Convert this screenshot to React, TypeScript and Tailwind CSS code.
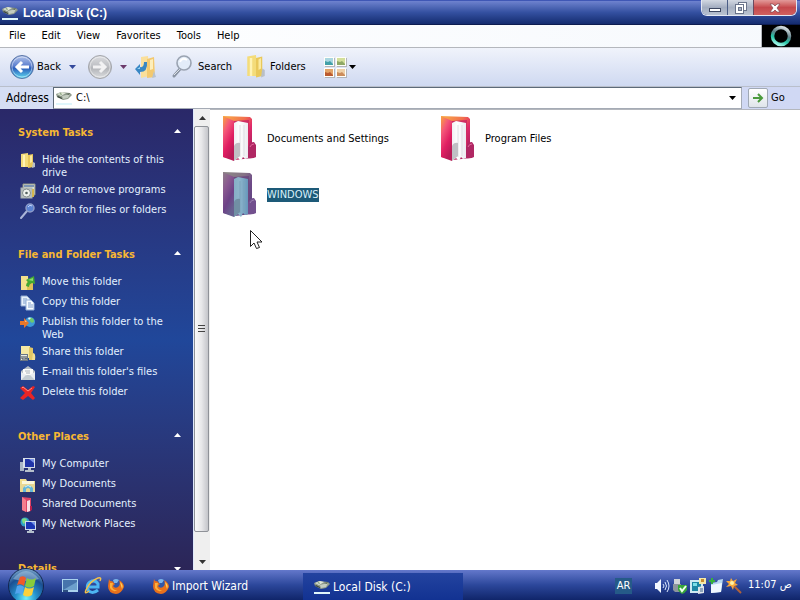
import React from "react";

type IconProps = { className?: string };

function DriveIcon({ className = "h-4 w-4" }: IconProps) {
  return (
    <svg viewBox="0 0 16 16" className={className} aria-hidden="true">
      <path d="M0 4 L5 2 L14 3 L16 5 L12 9 L7 10 L1 7Z" fill="#8f9a8c" />
      <path d="M1 4 L6 2 L10 3 L5 6Z" fill="#dfe6d6" />
      <path d="M6 6 L14 4 L12 8 L7 9Z" fill="#c4cdc0" />
      <path d="M2 6 L6 8 L6 9 L1 7Z" fill="#39453a" />
      <path d="M10 4 L14 3 L13 5Z" fill="#5d6b58" />
      <path d="M3 4 L5 3 L6 5Z" fill="#7d9a72" />
      <rect x="0" y="13" width="16" height="2" fill="#dff6fb" />
    </svg>
  );
}

function YellowFolder({ className = "h-4 w-4" }: IconProps) {
  return (
    <svg viewBox="0 0 16 16" preserveAspectRatio="none" className={className} aria-hidden="true">
      <path d="M1 1 L8 0 L9 14 L1 14Z" fill="#f4dc7a" />
      <path d="M3 2 L5 2 L5 14 L3 14Z" fill="#fff3b4" />
      <path d="M8 2 L13 1 L13 14 L8 15Z" fill="#e9c85a" />
      <path d="M10 3 L12 2 L12 9 L10 10Z" fill="#fbeaa0" />
      <path d="M13 9 L15 10 L15 14 L12 15Z" fill="#b9bfc6" />
    </svg>
  );
}

function ProgramsIcon() {
  return (
    <svg viewBox="0 0 16 16" className="h-4 w-4" aria-hidden="true">
      <path d="M3 1 H15 V12 H3Z" fill="#dbe0d3" stroke="#8d9385" />
      <rect x="4" y="2" width="10" height="2" fill="#7b94b4" />
      <rect x="1" y="5" width="11" height="10" fill="#b9c1c1" stroke="#a9b2b0" />
      <circle cx="6.500" cy="10" r="4" fill="#eef2ee" stroke="#828c8c" />
      <circle cx="6.500" cy="10" r="1.300" fill="#53605f" />
      <path d="M12 6 h2 v8 h-2z" fill="#d3b64f" />
    </svg>
  );
}

function SmallSearch() {
  return (
    <svg viewBox="0 0 16 16" className="h-4 w-4" aria-hidden="true">
      <path d="M7 8 L1 15" stroke="#a9b4d8" strokeWidth="2" strokeLinecap="round" />
      <circle cx="10" cy="5" r="4" fill="#5b83d2" stroke="#8d9cc9" strokeWidth="1.500" />
      <path d="M8 4 Q10 1 12 3" stroke="#c3d8ff" fill="none" />
    </svg>
  );
}

function MoveIcon() {
  return (
    <svg viewBox="0 0 16 16" className="h-4 w-4" aria-hidden="true">
      <path d="M1 1 H8 L9 15 H1Z" fill="#f3e08b" />
      <path d="M7 4 H13 V15 H7Z" fill="#dfc057" />
      <path d="M6 11 Q6 8 8 7 L6 5 L14 1 L15 9 L12 8 Q9 9 9 12Z" fill="#43a832" />
      <path d="M8 5 L13 3 L13 6Z" fill="#8bdc70" />
    </svg>
  );
}

function CopyIcon() {
  return (
    <svg viewBox="0 0 16 16" className="h-4 w-4" aria-hidden="true">
      <path d="M1 1 H7 L10 4 V11 H1Z" fill="#e6f0fb" stroke="#8fa9cf" />
      <path d="M3 4 H7 M3 6 H8 M3 8 H7" stroke="#7f9ecb" />
      <path d="M6 5 H11 L14 8 V15 H6Z" fill="#f8fcff" stroke="#94b0d6" />
      <path d="M8 8 H11 M8 10 H13 M8 12 H13" stroke="#7f9ecb" />
    </svg>
  );
}

function PublishIcon() {
  return (
    <svg viewBox="0 0 16 16" className="h-4 w-4" aria-hidden="true">
      <circle cx="10" cy="7" r="5" fill="#3f9bd6" />
      <path d="M9 3 Q14 2 14 7 Q11 9 10 6Z" fill="#6fc96a" />
      <path d="M8 3 Q10 2 11 3 L9 5Z" fill="#e2f6ff" />
      <path d="M0 6 H4 V3 L9 8 L4 13 V10 H0Z" fill="#e8772a" />
      <path d="M1 7 H5 V5 L7 7Z" fill="#ffb877" />
    </svg>
  );
}

function ShareIcon() {
  return (
    <svg viewBox="0 0 16 16" className="h-4 w-4" aria-hidden="true">
      <path d="M1 1 H10 V13 H1Z" fill="#f6e9a3" />
      <path d="M9 2 L13 3 V15 L9 15Z" fill="#e2c765" />
      <path d="M13 8 Q16 8 15 15 H12Z" fill="#f3df91" />
      <rect x="0.500" y="9.500" width="7" height="6" fill="#e9ece6" stroke="#6b7684" />
      <path d="M2 11 v3 M4 11 v2 M6 11 v3 M2 14 h5" stroke="#3a4350" />
    </svg>
  );
}

function MailIcon() {
  return (
    <svg viewBox="0 0 16 16" className="h-4 w-4" aria-hidden="true">
      <path d="M1 6 L8 1 L15 6 V15 H1Z" fill="#b4bcc4" />
      <path d="M3 4 H13 V10 H3Z" fill="#fbfbf8" />
      <path d="M1 7 L8 11 L15 7 V15 H1Z" fill="#e9edf0" />
      <path d="M1 15 L6 10 L8 11 L10 10 L15 15Z" fill="#c3ccd2" />
      <path d="M5 6 H10 M6 8 H10" stroke="#aab2ba" />
    </svg>
  );
}

function DeleteIcon() {
  return (
    <svg viewBox="0 0 16 16" className="h-4 w-4" aria-hidden="true">
      <path d="M0 3 L3 1 L8 5 L13 1 L15 2 L11 8 L15 13 L13 15 L8 11 L3 15 L0 13 L5 8Z" fill="#ea2525" />
      <path d="M2 3 L3 2 L8 6 L12 3" stroke="#ff8f85" fill="none" />
    </svg>
  );
}

function ComputerIcon() {
  return (
    <svg viewBox="0 0 16 16" className="h-4 w-4" aria-hidden="true">
      <path d="M0 5 H4 V14 H0Z" fill="#a9b6c6" />
      <path d="M3 1 H15 V11 H3Z" fill="#d6dee8" />
      <path d="M5 2 H14 V10 H5Z" fill="#2034a8" />
      <path d="M9 2 H14 V6Z" fill="#7d95e8" />
      <path d="M8 11 H11 V13 H14 V15 H5 V13 H8Z" fill="#b7c0cb" />
    </svg>
  );
}

function DocumentsIcon() {
  return (
    <svg viewBox="0 0 16 16" className="h-4 w-4" aria-hidden="true">
      <path d="M0 2 H6 L7 4 H15 V14 H0Z" fill="#f0dc8a" />
      <path d="M2 4 H14 V8 H2Z" fill="#fbf7dc" />
      <path d="M0 7 H15 V15 H0Z" fill="#e9d793" />
      <path d="M3 15 V11 Q8 5 13 11 V15 H10 V12 Q8 10 6 12 V15Z" fill="#65b7da" />
      <path d="M5 10 Q8 7 11 10" stroke="#d9f3fb" fill="none" />
    </svg>
  );
}

function SharedIcon() {
  return (
    <svg viewBox="0 0 16 16" className="h-4 w-4" aria-hidden="true">
      <path d="M2 0 L11 1 V14 L7 15 L2 13Z" fill="#dd4366" />
      <path d="M2 0 L6 3 V15 L2 13Z" fill="#f47d8e" />
      <path d="M7 4 L10 3 V14 L7 15Z" fill="#f8dfe6" />
      <path d="M10 9 L12 9 V13 L10 14Z" fill="#b5204e" />
    </svg>
  );
}

function NetworkIcon() {
  return (
    <svg viewBox="0 0 16 16" className="h-4 w-4" aria-hidden="true">
      <circle cx="5" cy="5" r="4.500" fill="#2ea2c9" />
      <path d="M2 2 Q6 0 7 3 L4 7 Q2 6 2 2Z" fill="#7fdc83" />
      <path d="M5 4 H16 V13 H5Z" fill="#cfdaea" />
      <path d="M6 5 H15 V12 H6Z" fill="#1b35b5" />
      <path d="M11 5 H15 V9Z" fill="#7795ea" />
      <path d="M9 13 H12 V14 H14 V16 H7 V14 H9Z" fill="#b5c0cd" />
    </svg>
  );
}

function NavCircle({ forward = false }: { forward?: boolean }) {
  const id = forward ? "nav-forward" : "nav-back";
  return (
    <svg viewBox="0 0 26 26" className="h-[26px] w-[26px]" aria-hidden="true">
      <defs>
        <linearGradient id={id} x1="0" y1="0" x2="0" y2="1">
          <stop offset="0" stopColor={forward ? "#dcdde0" : "#b4c4ea"} />
          <stop offset="0.450" stopColor={forward ? "#bfc1c5" : "#5d80cf"} />
          <stop offset="0.550" stopColor={forward ? "#b3b5b9" : "#2b5cba"} />
          <stop offset="1" stopColor={forward ? "#dcdee0" : "#5fdcf2"} />
        </linearGradient>
      </defs>
      <circle cx="13" cy="13" r="11.500" fill={`url(#${id})`} stroke={forward ? "#a3a5aa" : "#5a76a8"} />
      <circle cx="13" cy="13" r="10" fill="none" stroke="#ffffff" strokeOpacity="0.450" />
      <path
        d={forward ? "M6 13 H18 M13 8 L18 13 L13 18" : "M20 13 H8 M13 8 L8 13 L13 18"}
        fill="none"
        stroke={forward ? "#f2f2f3" : "#ffffff"}
        strokeWidth="3"
      />
    </svg>
  );
}

function UpIcon() {
  return (
    <svg viewBox="0 0 22 24" className="h-6 w-[22px]" aria-hidden="true">
      <path d="M6 2 L13 1 L14 21 L6 23Z" fill="#fadf9b" />
      <path d="M12 4 L19 2 L20 22 L12 23Z" fill="#f3c970" />
      <path d="M15 5 L18 4 L18 14 L15 15Z" fill="#fdeebb" />
      <path d="M19 16 L21 22 L17 23Z" fill="#b8c3cf" />
      <path d="M0 14 L5 9 V12 Q9 13 9 7 L12 7 Q13 17 5 17 V20Z" fill="#3887c4" />
      <path d="M2 14 L5 12 V14Z" fill="#9ed6f2" />
    </svg>
  );
}

function SearchIcon() {
  return (
    <svg viewBox="0 0 22 24" className="h-6 w-[22px]" aria-hidden="true">
      <path d="M9 14 L3 21" stroke="#8a94a4" strokeWidth="3" strokeLinecap="round" />
      <path d="M9 14 L3 20" stroke="#dde2e8" strokeWidth="1" />
      <circle cx="13" cy="8" r="7" fill="#e3ecf8" stroke="#9aa3b1" strokeWidth="1.600" />
      <path d="M9 7 Q11 2 16 5" stroke="#ffffff" strokeWidth="2" fill="none" />
    </svg>
  );
}

function ViewsIcon() {
  const tiles = [
    { x: 0, y: 0, a: "#a9d6e0", b: "#43a0a8" },
    { x: 12, y: 0, a: "#d3df9b", b: "#8fa866" },
    { x: 0, y: 11, a: "#e3a468", b: "#bb5a30" },
    { x: 12, y: 11, a: "#efd0a6", b: "#cc8c5a" },
  ];
  return (
    <svg viewBox="0 0 23 21" className="h-[21px] w-[23px]" aria-hidden="true">
      {tiles.map((t) => (
        <g key={`${t.x}-${t.y}`}>
          <rect x={t.x + 1} y={t.y + 1} width="10" height="9" fill="#b3b5b8" />
          <rect x={t.x} y={t.y} width="10" height="9" fill="#fffef8" />
          <rect x={t.x + 1} y={t.y + 1} width="8" height="7" fill={t.a} />
          <path d={`M${t.x + 1} ${t.y + 4} l3 1 l2 -1 l3 3 v1 h-8z`} fill={t.b} />
        </g>
      ))}
    </svg>
  );
}

function Caret({ className }: IconProps) {
  return (
    <svg viewBox="0 0 7 4" className={`h-1 w-[7px] ${className ?? ""}`} aria-hidden="true">
      <path d="M0 0 H7 L3.500 4Z" fill="currentColor" />
    </svg>
  );
}

function BigFolder({ id, selected = false }: { id: string; selected?: boolean }) {
  return (
    <svg viewBox="0 0 48 48" className="h-12 w-12 shrink-0" aria-hidden="true">
      <defs>
        <linearGradient id={`${id}-side`} x1="0" y1="0" x2="0.500" y2="1">
          <stop offset="0" stopColor={selected ? "#8f8088" : "#f9a63c"} />
          <stop offset="0.350" stopColor={selected ? "#8a5a90" : "#f4567a"} />
          <stop offset="0.700" stopColor={selected ? "#6d4287" : "#e01e62"} />
          <stop offset="1" stopColor={selected ? "#67608f" : "#b91a57"} />
        </linearGradient>
        <linearGradient id={`${id}-back`} x1="0" y1="0" x2="1" y2="1">
          <stop offset="0" stopColor={selected ? "#8d8a86" : "#f9b048"} />
          <stop offset="0.400" stopColor={selected ? "#857286" : "#f2704e"} />
          <stop offset="0.600" stopColor={selected ? "#6e4a88" : "#e0286a"} />
          <stop offset="1" stopColor={selected ? "#574079" : "#8f1d58"} />
        </linearGradient>
        <linearGradient id={`${id}-paper`} x1="0" y1="0" x2="1" y2="0">
          <stop offset="0" stopColor={selected ? "#86afc6" : "#f1f0f3"} />
          <stop offset="0.400" stopColor={selected ? "#8eb6cc" : "#ffffff"} />
          <stop offset="1" stopColor={selected ? "#6797bb" : "#eceaf0"} />
        </linearGradient>
      </defs>
      <path d="M9 1 L36 2 L38 4 V43 L21 45 L9 42Z" fill={`url(#${id}-back)`} />
      <path d="M20 6 L35 5 V40 H20Z" fill={selected ? "#6c4a80" : "#d02c62"} />
      <path d="M20 8 L24 6 L34 8 V43 L31 44 L29 42 L27 46 L24 43 L20 46Z" fill={`url(#${id}-paper)`} />
      <path d="M26 10 V42 M30 10 V41" stroke={selected ? "#7ba3bc" : "#dddde2"} strokeWidth="1" />
      <path d="M9 1 L20 6 V29 L20 46 L9 42Z" fill={`url(#${id}-side)`} />
      <path d="M20 31 Q22 27 26 28 L26 41 L20 46Z" fill={selected ? "#7190a4" : "#c0bfc4"} />
      <path d="M34 32 Q36 27 40 27 L42 30 V42 Q39 44 34 43Z" fill={selected ? "#72508e" : "#b02763"} />
      <path d="M36 32 Q37 29 40 29" stroke={selected ? "#9a7fb0" : "#e2669a"} fill="none" />
    </svg>
  );
}

function FirefoxIcon() {
  return (
    <svg viewBox="0 0 16 16" className="h-4 w-4 shrink-0" aria-hidden="true">
      <circle cx="8" cy="7" r="6" fill="#3157a8" />
      <path d="M5 2 Q8 0 11 2 L9 5 L6 5Z" fill="#7cb4ea" />
      <path d="M1 1 Q2 4 4 3 L7 6 L5 8 Q7 11 10 9 Q13 7 11 2 Q16 5 16 9 Q13 16 8 16 Q0 15 0 8Z" fill="#e8701c" />
      <path d="M2 5 L5 5 L4 9 Q6 13 10 12 Q5 15 2 10Z" fill="#fbb13c" />
      <path d="M12 4 Q16 7 14 11 Q13 8 12 4Z" fill="#fdd05a" />
    </svg>
  );
}

function ExplorerIcon() {
  return (
    <svg viewBox="0 0 18 18" className="h-[18px] w-[18px]" aria-hidden="true">
      <path d="M14 13 Q8 18 4 13 Q2 8 6 5 Q11 2 14 7 V10 H5" fill="none" stroke="#4db5f2" strokeWidth="3" />
      <path d="M5 14 Q0 18 2 13 Q6 4 14 1 Q18 0 16 4" fill="none" stroke="#f2c14c" strokeWidth="1.500" />
    </svg>
  );
}

function DesktopIcon() {
  return (
    <svg viewBox="0 0 16 14" className="h-[14px] w-4" aria-hidden="true">
      <rect x="0" y="0" width="16" height="13" fill="#a9d2ee" />
      <rect x="1" y="1" width="14" height="10" fill="#4674ac" />
      <path d="M1 11 L15 3 V11Z" fill="#6da0cc" />
      <rect x="1" y="11" width="5" height="2" fill="#2b4d80" />
    </svg>
  );
}

function StartOrb() {
  return (
    <svg viewBox="0 0 36 36" className="h-9 w-9" aria-hidden="true">
      <defs>
        <radialGradient id="orb" cx="0.500" cy="0.850" r="0.850">
          <stop offset="0" stopColor="#6ff0fa" />
          <stop offset="0.350" stopColor="#2592cd" />
          <stop offset="0.700" stopColor="#1b4f92" />
          <stop offset="1" stopColor="#7fa9cd" />
        </radialGradient>
      </defs>
      <circle cx="18" cy="18" r="17.500" fill="url(#orb)" stroke="#12264f" />
      <path d="M5 11 Q18 -5 31 11 Q18 15 5 11Z" fill="#bad6ea" opacity="0.450" />
      <path d="M12 9 Q16 7 18 10 L16 18 Q13 15 9 17Z" fill="#ef5a2a" />
      <path d="M19 10 Q23 13 28 10 L26 18 Q21 21 17 18Z" fill="#88cc3c" />
      <path d="M9 18 Q13 16 16 19 L14 27 Q11 24 7 26Z" fill="#52a5ee" />
      <path d="M17 19 Q21 22 26 19 L24 27 Q19 30 15 27Z" fill="#fbd13b" />
    </svg>
  );
}

function VolumeIcon() {
  return (
    <svg viewBox="0 0 16 16" className="h-4 w-4" aria-hidden="true">
      <path d="M1 5 H3 L7 1 V15 L3 11 H1Z" fill="#f2f7ff" />
      <path d="M9 6 Q11 8 9 10 M11 4 Q14 8 11 12 M13 2 Q17 8 13 14" stroke="#dbe7ff" fill="none" />
    </svg>
  );
}

function SafeRemoveIcon() {
  return (
    <svg viewBox="0 0 16 16" className="h-4 w-4" aria-hidden="true">
      <rect x="2" y="1" width="6" height="5" fill="#d0d4da" />
      <path d="M1 6 H9 V12 L7 14 H3 L1 12Z" fill="#8c949d" />
      <path d="M6 7 H15 V12 Q13 15 10 16 Q7 14 6 12Z" fill="#37a53a" />
      <path d="M8 10 L10 13 L14 8" stroke="#f0fff0" strokeWidth="2" fill="none" />
    </svg>
  );
}

function MonitorTrayIcon() {
  return (
    <svg viewBox="0 0 16 16" className="h-4 w-4" aria-hidden="true">
      <rect x="0" y="2" width="13" height="13" fill="#cdeaf3" />
      <rect x="2" y="4" width="9" height="9" fill="#1d87a5" />
      <path d="M3 5 H7 V8 H3Z" fill="#7be0e8" />
      <rect x="9" y="0" width="7" height="6" fill="#f4e9a8" />
      <rect x="11" y="1" width="3" height="3" fill="#c78d2f" />
      <path d="M8 9 L14 8 V15 L8 16Z" fill="#dfe5ea" />
      <path d="M10 11 H13 M10 13 H13" stroke="#3a628d" />
    </svg>
  );
}

function TrayFolderIcon() {
  return (
    <svg viewBox="0 0 16 16" className="h-4 w-4" aria-hidden="true">
      <path d="M3 5 L9 4 L10 2 L15 1 L13 14 L3 15Z" fill="#b5d7f1" />
      <path d="M3 7 L14 5 L13 14 L3 15Z" fill="#eff8ff" />
      <path d="M4 0 V6 M1 3 H7" stroke="#36b23c" strokeWidth="2" />
    </svg>
  );
}

function WandIcon() {
  return (
    <svg viewBox="0 0 16 16" className="h-4 w-4" aria-hidden="true">
      <path d="M7 7 L15 15" stroke="#b0623a" strokeWidth="2" />
      <path d="M5 0 L7 3 L11 1 L9 5 L12 7 L8 8 L7 12 L5 8 L0 9 L3 6 L0 3 L4 3Z" fill="#f9a93c" />
      <circle cx="6" cy="5" r="2" fill="#fff3a6" />
    </svg>
  );
}

type Task = { label: string; icon: React.ReactNode };

const systemTasks: Task[] = [
  { label: "Hide the contents of this drive", icon: <YellowFolder /> },
  { label: "Add or remove programs", icon: <ProgramsIcon /> },
  { label: "Search for files or folders", icon: <SmallSearch /> },
];

const folderTasks: Task[] = [
  { label: "Move this folder", icon: <MoveIcon /> },
  { label: "Copy this folder", icon: <CopyIcon /> },
  { label: "Publish this folder to the Web", icon: <PublishIcon /> },
  { label: "Share this folder", icon: <ShareIcon /> },
  { label: "E-mail this folder's files", icon: <MailIcon /> },
  { label: "Delete this folder", icon: <DeleteIcon /> },
];

const otherPlaces: Task[] = [
  { label: "My Computer", icon: <ComputerIcon /> },
  { label: "My Documents", icon: <DocumentsIcon /> },
  { label: "Shared Documents", icon: <SharedIcon /> },
  { label: "My Network Places", icon: <NetworkIcon /> },
];

function TaskGroup({ title, tasks }: { title: string; tasks?: Task[] }) {
  const open = tasks !== undefined;
  return (
    <section className="flex flex-col gap-3">
      <h2>
        <button
          type="button"
          aria-expanded={open}
          className="flex h-4 w-full items-center justify-between pr-3 pl-[18px] text-left font-bold text-[#f7b733]"
        >
          {title}
          <Caret className={open ? "mb-1 rotate-180 text-white" : "text-white"} />
        </button>
      </h2>
      {tasks && (
        <ul className="flex flex-col gap-1 pr-6 pl-5">
          {tasks.map((task) => (
            <li key={task.label}>
              <a href="#" className="flex min-h-4 items-start gap-1.5 leading-[13px] text-[#e4f1ff]">
                <span className="h-4 w-4 shrink-0">{task.icon}</span>
                <span>{task.label}</span>
              </a>
            </li>
          ))}
        </ul>
      )}
    </section>
  );
}

function TitleBar() {
  return (
    <header className="flex h-[25px] shrink-0 items-center bg-linear-to-b from-[#7487d3] via-[#3450a0] to-[#12296b] pr-[3px] pl-0.5 shadow-[inset_0_1px_0_#3f57b5,inset_0_-1px_0_#0d1c50]">
      <DriveIcon className="h-4 w-4" />
      <h1 className="ml-[5px] font-['Liberation_Sans',Arial,sans-serif] text-xs font-bold text-white">Local Disk (C:)</h1>
      <div className="ml-auto flex h-4 self-start overflow-hidden rounded-b-md border border-t-0 border-[#e4e8f3]">
        <button
          type="button"
          aria-label="Minimize"
          className="flex w-[26px] items-center justify-center border-r border-[#4b5d86] bg-linear-to-b from-[#d3d8e2] via-[#a3adc0] to-[#b9c2d0]"
        >
          <span className="mt-1 h-1 w-3 border border-[#3c4660] bg-white" />
        </button>
        <button
          type="button"
          aria-label="Restore"
          className="flex w-[26px] items-center justify-center border-r border-[#6a4a60] bg-linear-to-b from-[#d3d8e2] via-[#a8b1c2] to-[#bdc5d2]"
        >
          <svg viewBox="0 0 12 12" className="h-3 w-3" aria-hidden="true">
            <rect x="3.500" y="0.500" width="8" height="8" fill="#ffffff" stroke="#6a748b" />
            <rect x="0.500" y="2.500" width="8" height="9" fill="#ffffff" stroke="#6a748b" />
            <rect x="3.500" y="5.500" width="3" height="3" fill="#aab3c3" stroke="#6a748b" />
          </svg>
        </button>
        <button
          type="button"
          aria-label="Close"
          className="flex w-[42px] items-center justify-center bg-linear-to-b from-[#e29a9a] via-[#c5484c] to-[#d0605f]"
        >
          <svg viewBox="0 0 12 10" className="h-2.5 w-3" aria-hidden="true">
            <path d="M1 1 H4 L6 3 L8 1 H11 L8 5 L11 9 H8 L6 7 L4 9 H1 L4 5Z" fill="#ffffff" stroke="#7b4752" strokeWidth="0.700" />
          </svg>
        </button>
      </div>
    </header>
  );
}

function MenuBar() {
  return (
    <div className="flex h-[23px] shrink-0 border-b border-[#b4b7bd] bg-linear-to-r from-[#ffffff] to-[#f6f9fd]">
      <nav aria-label="Menu" className="flex flex-1 items-center gap-4 border-r border-[#b4b7bd] pl-[9px]">
        {["File", "Edit", "View", "Favorites", "Tools", "Help"].map((item) => (
          <button key={item} type="button">
            {item}
          </button>
        ))}
      </nav>
      <div className="flex w-[38px] items-center justify-center bg-black">
        <svg viewBox="0 0 22 22" className="h-[22px] w-[22px]" aria-hidden="true">
          <defs>
            <linearGradient id="throbber" x1="0.700" y1="0" x2="0.300" y2="1">
              <stop offset="0" stopColor="#d5dcdf" />
              <stop offset="0.400" stopColor="#5d7f87" />
              <stop offset="0.700" stopColor="#23c3a4" />
              <stop offset="1" stopColor="#9ff3e6" />
            </linearGradient>
          </defs>
          <circle cx="11" cy="11" r="8.500" fill="none" stroke="url(#throbber)" strokeWidth="3.500" />
        </svg>
      </div>
    </div>
  );
}

function Toolbar() {
  return (
    <div role="toolbar" aria-label="Standard buttons" className="flex h-[39px] shrink-0 items-center border-b border-[#b9bfcb] bg-linear-to-b from-[#f0f3fb] to-[#cfd9f1] pl-[9px]">
      <button type="button" className="flex w-[60px] items-center gap-0.5">
        <NavCircle />
        Back
      </button>
      <button type="button" aria-label="Back history" className="w-[18px]">
        <Caret className="text-[#33499b]" />
      </button>
      <button type="button" aria-label="Forward" className="w-[33px]">
        <NavCircle forward />
      </button>
      <button type="button" aria-label="Forward history" className="w-[15px]">
        <Caret className="text-[#6b3a6b]" />
      </button>
      <button type="button" aria-label="Up" className="w-9">
        <UpIcon />
      </button>
      <button type="button" className="flex w-[75px] items-center gap-[5px]">
        <SearchIcon />
        Search
      </button>
      <button type="button" className="flex w-[78px] items-center gap-1">
        <YellowFolder className="h-6 w-5" />
        Folders
      </button>
      <button type="button" aria-label="Views" className="flex items-center gap-0.5">
        <ViewsIcon />
        <Caret className="text-black" />
      </button>
    </div>
  );
}

function AddressBar() {
  return (
    <form className="flex h-[22px] shrink-0 items-stretch bg-linear-to-r from-[#d5def3] to-[#d0d8f4] pl-1.5" onSubmit={(e) => e.preventDefault()}>
      <label htmlFor="address" className="w-[47px] self-center text-xs">
        Address
      </label>
      <div className="flex flex-1 items-center border border-[#a5abb5] border-t-[#5d6a78] border-l-[#5d6a78] bg-white pl-0.5">
        <DriveIcon />
        <input id="address" type="text" defaultValue="C:\" className="min-w-0 flex-1 bg-transparent px-1 outline-none" />
        <button type="button" aria-label="Address history" className="flex w-[17px] items-center justify-center">
          <Caret className="text-black" />
        </button>
      </div>
      <button type="submit" className="flex w-[58px] items-center gap-[3px] pl-1.5">
        <span className="flex h-5 w-5 items-center justify-center rounded-xs border border-[#a0a9b5] bg-linear-to-b from-white to-[#dfe5ea]">
          <svg viewBox="0 0 12 12" className="h-3 w-3" aria-hidden="true">
            <path d="M1 6 H10 M6 2 L10 6 L6 10" stroke="#4a9a3c" strokeWidth="2" fill="none" />
          </svg>
        </span>
        Go
      </button>
    </form>
  );
}

function ScrollBar() {
  return (
    <div className="flex w-[17px] shrink-0 flex-col border-l border-[#dfe9fb] bg-[#efefef]">
      <button type="button" aria-label="Scroll up" className="flex h-[17px] items-center justify-center">
        <Caret className="rotate-180 text-[#333333]" />
      </button>
      <div className="flex-1">
        <div className="flex h-[95%] w-[15px] flex-col items-center justify-center gap-0.5 rounded-xs border border-[#8f9298] bg-linear-to-r from-[#fafafa] via-[#e8e8ea] to-[#c4c5ca]">
          <span className="h-px w-[7px] bg-[#444444]" />
          <span className="h-px w-[7px] bg-[#444444]" />
          <span className="h-px w-[7px] bg-[#444444]" />
        </div>
      </div>
      <button type="button" aria-label="Scroll down" className="flex h-[17px] items-center justify-center">
        <Caret className="text-[#333333]" />
      </button>
    </div>
  );
}

const files = [
  { id: "documents", name: "Documents and Settings", selected: false },
  { id: "programs", name: "Program Files", selected: false },
  { id: "windows", name: "WINDOWS", selected: true },
];

function Taskbar() {
  return (
    <footer className="relative flex h-[30px] shrink-0 items-center bg-linear-to-b from-[#6478cb] via-[#2c479b] to-[#10256a] pt-px pr-2 pl-[62px] text-white">
      <button type="button" aria-label="Start" className="absolute -top-0.5 left-2 h-8 overflow-hidden">
        <StartOrb />
      </button>
      <div className="flex items-center gap-1.5">
        <button type="button" aria-label="Show desktop">
          <DesktopIcon />
        </button>
        <button type="button" aria-label="Internet Explorer">
          <ExplorerIcon />
        </button>
        <button type="button" aria-label="Firefox">
          <FirefoxIcon />
        </button>
      </div>
      <div className="ml-[17px] flex flex-1 gap-0.5 self-stretch text-xs">
        <button type="button" className="flex w-40 items-center gap-[3px] pl-3">
          <FirefoxIcon />
          Import Wizard
        </button>
        <button type="button" className="mt-0.5 flex w-40 items-center gap-[3px] bg-linear-to-b from-[#23439f] to-[#123292] pl-[11px]">
          <DriveIcon className="h-4 w-4 shrink-0" />
          Local Disk (C:)
        </button>
      </div>
      <button type="button" aria-label="Input language" className="mr-[22px] h-4 w-[17px] bg-[#255a88] text-center">
        AR
      </button>
      <div className="flex items-center gap-0.5">
        <VolumeIcon />
        <SafeRemoveIcon />
        <MonitorTrayIcon />
        <TrayFolderIcon />
        <WandIcon />
      </div>
      <time className="ml-1.5 w-11 whitespace-nowrap">11:07 ص</time>
    </footer>
  );
}

export default function App() {
  return (
    <div className="relative flex h-screen flex-col overflow-hidden bg-white font-['DejaVu_Sans_Condensed',Tahoma,'DejaVu_Sans',sans-serif] text-[11px] text-black">
      <TitleBar />
      <MenuBar />
      <Toolbar />
      <AddressBar />
      <div className="flex min-h-0 flex-1">
        <aside className="flex w-[193px] shrink-0 flex-col gap-7 overflow-hidden bg-linear-to-b from-[#2a2868] via-[#20479a] to-[#2b2557] pt-4">
          <TaskGroup title="System Tasks" tasks={systemTasks} />
          <TaskGroup title="File and Folder Tasks" tasks={folderTasks} />
          <TaskGroup title="Other Places" tasks={otherPlaces} />
          <TaskGroup title="Details" />
        </aside>
        <ScrollBar />
        <main className="flex-1 border-t border-[#b4b7bd] bg-white pt-px pl-1">
          <ul className="grid grid-cols-[repeat(auto-fill,218px)]">
            {files.map((file) => (
              <li key={file.id}>
                <button type="button" className="flex h-14 w-full items-center gap-[5px] text-left leading-[14px]">
                  <BigFolder id={file.id} selected={file.selected} />
                  <span className={file.selected ? "block bg-[#1d5a78] text-[#d8f0fa]" : "block"}>{file.name}</span>
                </button>
              </li>
            ))}
          </ul>
        </main>
      </div>
      <Taskbar />
      <svg viewBox="0 0 13 20" className="pointer-events-none absolute top-[230px] left-[250px] h-5 w-[13px]" aria-hidden="true">
        <path d="M0.500 0.500 V16.500 L4 13 L6.500 18.500 L9.500 17.500 L7 12 H12Z" fill="#ffffff" stroke="#222222" />
      </svg>
    </div>
  );
}
